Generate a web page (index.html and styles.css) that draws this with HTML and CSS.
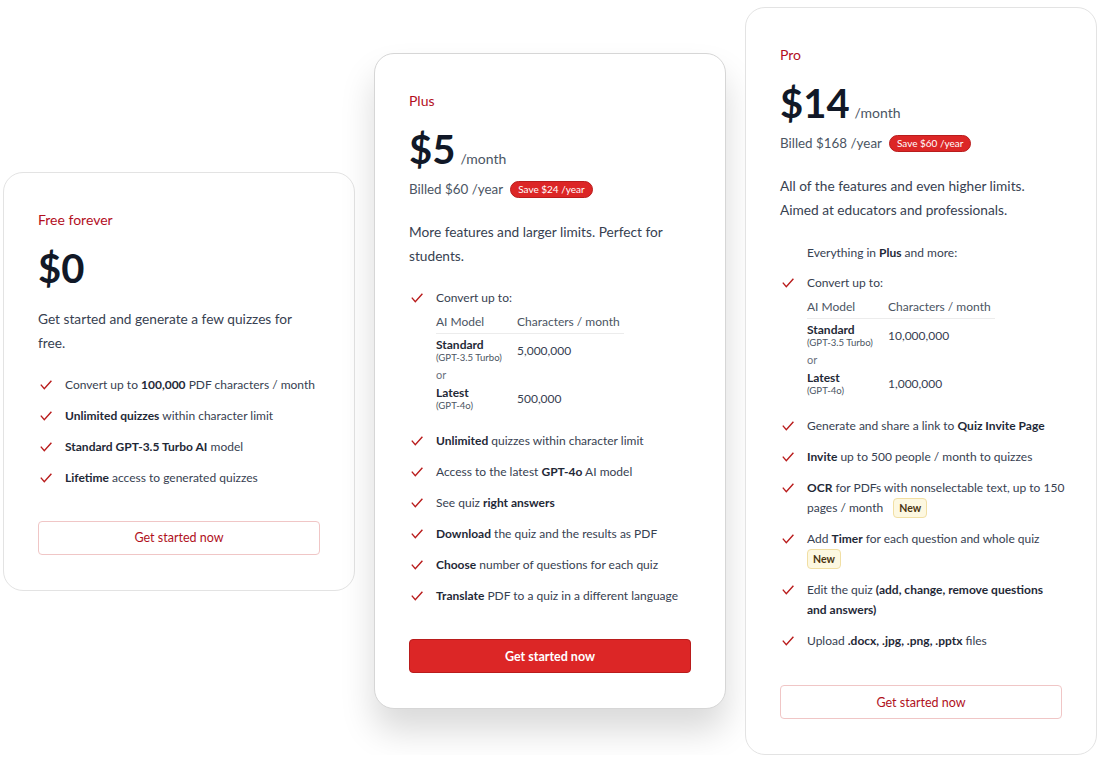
FILE: index.html
```html
<!DOCTYPE html>
<html lang="en">
<head>
<meta charset="utf-8">
<title>Pricing</title>
<link rel="stylesheet" href="styles.css">
</head>
<body>
<div class="pricing">
  <section class="card">
    <div class="label">Free forever</div>
    <div class="price-row"><span class="price">$0</span></div>
    <p class="desc desc-free">Get started and generate a few quizzes for free.</p>
    <ul class="features">
      <li><svg class="check" viewBox="0 0 12 10"><path d="M0.8 4.6 L4.3 8.8 L11.4 0.8"/></svg><span>Convert up to <b>100,000</b> PDF characters / month</span></li>
      <li><svg class="check" viewBox="0 0 12 10"><path d="M0.8 4.6 L4.3 8.8 L11.4 0.8"/></svg><span><b>Unlimited quizzes</b> within character limit</span></li>
      <li><svg class="check" viewBox="0 0 12 10"><path d="M0.8 4.6 L4.3 8.8 L11.4 0.8"/></svg><span><b>Standard GPT-3.5 Turbo AI</b> model</span></li>
      <li><svg class="check" viewBox="0 0 12 10"><path d="M0.8 4.6 L4.3 8.8 L11.4 0.8"/></svg><span><b>Lifetime</b> access to generated quizzes</span></li>
    </ul>
    <button class="btn btn-outline">Get started now</button>
  </section>

  <section class="card card-featured">
    <div class="label">Plus</div>
    <div class="price-row"><span class="price">$5</span><span class="per">/month</span></div>
    <div class="billed">Billed $60 /year <span class="save">Save $24 /year</span></div>
    <p class="desc">More features and larger limits. Perfect for students.</p>
    <ul class="features">
      <li><svg class="check" viewBox="0 0 12 10"><path d="M0.8 4.6 L4.3 8.8 L11.4 0.8"/></svg>
        <div class="convert">
          <span>Convert up to:</span>
          <table class="limits">
            <tr><th class="col-model">AI Model</th><th>Characters / month</th></tr>
            <tr><td><b>Standard</b><small>(GPT-3.5 Turbo)</small></td><td>5,000,000</td></tr>
            <tr class="or"><td colspan="2">or</td></tr>
            <tr><td><b>Latest</b><small>(GPT-4o)</small></td><td>500,000</td></tr>
          </table>
        </div>
      </li>
      <li><svg class="check" viewBox="0 0 12 10"><path d="M0.8 4.6 L4.3 8.8 L11.4 0.8"/></svg><span><b>Unlimited</b> quizzes within character limit</span></li>
      <li><svg class="check" viewBox="0 0 12 10"><path d="M0.8 4.6 L4.3 8.8 L11.4 0.8"/></svg><span>Access to the latest <b>GPT-4o</b> AI model</span></li>
      <li><svg class="check" viewBox="0 0 12 10"><path d="M0.8 4.6 L4.3 8.8 L11.4 0.8"/></svg><span>See quiz <b>right answers</b></span></li>
      <li><svg class="check" viewBox="0 0 12 10"><path d="M0.8 4.6 L4.3 8.8 L11.4 0.8"/></svg><span><b>Download</b> the quiz and the results as PDF</span></li>
      <li><svg class="check" viewBox="0 0 12 10"><path d="M0.8 4.6 L4.3 8.8 L11.4 0.8"/></svg><span><b>Choose</b> number of questions for each quiz</span></li>
      <li><svg class="check" viewBox="0 0 12 10"><path d="M0.8 4.6 L4.3 8.8 L11.4 0.8"/></svg><span><b>Translate</b> PDF to a quiz in a different language</span></li>
    </ul>
    <button class="btn btn-solid">Get started now</button>
  </section>

  <section class="card">
    <div class="label">Pro</div>
    <div class="price-row"><span class="price">$14</span><span class="per">/month</span></div>
    <div class="billed">Billed $168 /year <span class="save">Save $60 /year</span></div>
    <p class="desc">All of the features and even higher limits. Aimed at educators and professionals.</p>
    <p class="everything">Everything in <b>Plus</b> and more:</p>
    <ul class="features">
      <li><svg class="check" viewBox="0 0 12 10"><path d="M0.8 4.6 L4.3 8.8 L11.4 0.8"/></svg>
        <div class="convert">
          <span>Convert up to:</span>
          <table class="limits">
            <tr><th class="col-model">AI Model</th><th>Characters / month</th></tr>
            <tr><td><b>Standard</b><small>(GPT-3.5 Turbo)</small></td><td>10,000,000</td></tr>
            <tr class="or"><td colspan="2">or</td></tr>
            <tr><td><b>Latest</b><small>(GPT-4o)</small></td><td>1,000,000</td></tr>
          </table>
        </div>
      </li>
      <li><svg class="check" viewBox="0 0 12 10"><path d="M0.8 4.6 L4.3 8.8 L11.4 0.8"/></svg><span>Generate and share a link to <b>Quiz Invite Page</b></span></li>
      <li><svg class="check" viewBox="0 0 12 10"><path d="M0.8 4.6 L4.3 8.8 L11.4 0.8"/></svg><span><b>Invite</b> up to 500 people / month to quizzes</span></li>
      <li><svg class="check" viewBox="0 0 12 10"><path d="M0.8 4.6 L4.3 8.8 L11.4 0.8"/></svg><span><span class="nowrap"><b>OCR</b> for PDFs with nonselectable text, up to 150</span><br>pages / month <span class="new">New</span></span></li>
      <li><svg class="check" viewBox="0 0 12 10"><path d="M0.8 4.6 L4.3 8.8 L11.4 0.8"/></svg><span>Add <b>Timer</b> for each question and whole quiz<br><span class="new new-start">New</span></span></li>
      <li><svg class="check" viewBox="0 0 12 10"><path d="M0.8 4.6 L4.3 8.8 L11.4 0.8"/></svg><span>Edit the quiz <b>(add, change, remove questions and answers)</b></span></li>
      <li><svg class="check" viewBox="0 0 12 10"><path d="M0.8 4.6 L4.3 8.8 L11.4 0.8"/></svg><span>Upload <b>.docx, .jpg, .png, .pptx</b> files</span></li>
    </ul>
    <button class="btn btn-outline btn-pro">Get started now</button>
  </section>
</div>
</body>
</html>
```

FILE: styles.css
```css
* { box-sizing: border-box; }
html, body { margin: 0; padding: 0; background: #fff; }
body {
  font-family: Lato, "Noto Sans", Arial, sans-serif;
  color: #374151;
  font-size: 12px;
}
.pricing {
  display: flex;
  align-items: center;
  gap: 19px;
  padding: 7px 0 0 3px;
}
.card {
  width: 352px;
  flex: none;
  background: #fff;
  border: 1px solid #e3e3e3;
  border-radius: 20px;
  padding: 37px 34px 35px 34px;
}
.card-featured {
  box-shadow: 0 22px 34px rgba(0, 0, 0, 0.15);
  border-color: #d6d6d6;
}
.label {
  color: #b30f1e;
  font-size: 14px;
  font-weight: 400;
  line-height: 20px;
}
.price-row {
  margin-top: 14px;
  display: flex;
  align-items: baseline;
  height: 48px;
}
.price {
  font-size: 40px;
  font-weight: 700;
  color: #111827;
  line-height: 48px;
}
.per {
  font-size: 14px;
  color: #4b5563;
  margin-left: 5px;
}
.billed {
  margin-top: 6px;
  font-size: 13.4px;
  line-height: 20px;
  color: #4b5563;
  display: flex;
  align-items: center;
}
.save {
  margin-left: 7px;
  background: #dc2626;
  border: 1px solid #b91c1c;
  color: #fff;
  font-size: 10px;
  line-height: 15px;
  padding: 0 7px;
  border-radius: 9px;
}
.desc {
  margin: 21px 0 0;
  font-size: 13.7px;
  line-height: 24px;
  color: #374151;
}
.desc-free { margin-top: 15px; }
.everything {
  margin: 21px 0 0 27px;
  font-size: 12px;
  line-height: 20px;
  color: #374151;
}
.everything b { color: #1f2937; font-weight: 700; }
.features {
  list-style: none;
  padding: 0;
  margin: 20px 0 0;
  display: flex;
  flex-direction: column;
  gap: 11px;
}
.everything + .features { margin-top: 10px; }
.features li {
  display: flex;
  align-items: flex-start;
  font-size: 12px;
  line-height: 20px;
}
.features b { font-weight: 700; color: #1f2937; }
.nowrap { white-space: nowrap; }
.check {
  flex: none;
  width: 12px;
  height: 10px;
  margin: 5px 13px 0 2px;
  fill: none;
  stroke: #b91c1c;
  stroke-width: 1.4;
}
.new {
  display: inline-block;
  margin-left: 7px;
  background: #fdf8e1;
  border: 1px solid #f1dfa4;
  color: #4a3510;
  font-weight: 700;
  font-size: 10.5px;
  line-height: 16px;
  padding: 1px 5px;
  border-radius: 4px;
}
.new.new-start { margin-left: 0; }
.convert { display: flex; flex-direction: column; margin-bottom: 8px; }
.limits {
  border-collapse: collapse;
  margin-top: 5px;
  font-size: 12px;
}
.limits th {
  text-align: left;
  font-weight: 400;
  color: #4b5563;
  padding: 0 4px 2px 0;
  line-height: 18px;
  border-bottom: 1px solid #ececec;
}
.limits th.col-model { width: 81px; }
.limits td {
  padding: 4px 4px 0 0;
  vertical-align: middle;
  color: #374151;
  line-height: 14px;
}
.limits td b { display: block; font-weight: 700; color: #1f2937; }
.limits small { display: block; font-size: 9.6px; color: #4b5563; line-height: 12px; }
.limits tr.or td { font-size: 11px; color: #6b7280; padding-top: 4px; line-height: 14px; }
.btn {
  display: block;
  width: 100%;
  margin-top: 33px;
  height: 34px;
  border-radius: 4px;
  font-family: inherit;
  font-size: 12.5px;
  font-weight: 400;
  cursor: pointer;
}
.btn-pro { margin-top: 34px; }
.btn-outline {
  background: #fff;
  border: 1px solid #f0c6c6;
  color: #b0101c;
}
.btn-solid {
  background: #dc2626;
  border: 1px solid #b91c1c;
  color: #fff;
  font-weight: 700;
}
```
